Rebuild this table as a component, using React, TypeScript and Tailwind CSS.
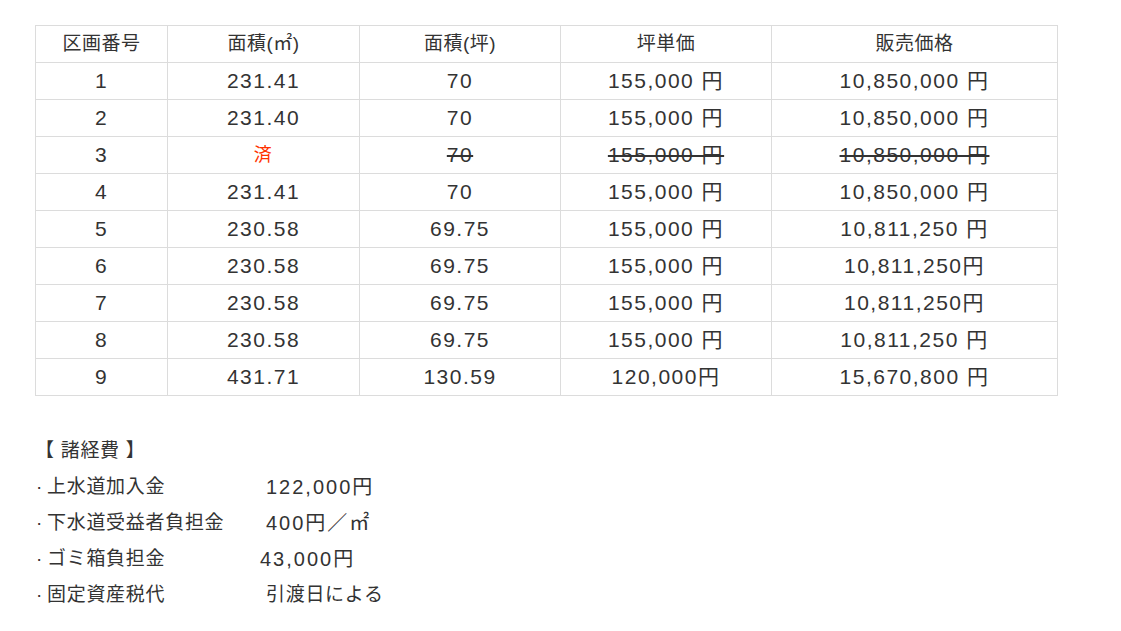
import React from 'react';

type Row = {
  no: string;
  area: string;
  tsubo: string;
  unit: string;
  price: string;
  sold?: boolean;
};

const rows: Row[] = [
  { no: '1', area: '231.41', tsubo: '70', unit: '155,000 円', price: '10,850,000 円' },
  { no: '2', area: '231.40', tsubo: '70', unit: '155,000 円', price: '10,850,000 円' },
  { no: '3', area: '済', tsubo: '70', unit: '155,000 円', price: '10,850,000 円', sold: true },
  { no: '4', area: '231.41', tsubo: '70', unit: '155,000 円', price: '10,850,000 円' },
  { no: '5', area: '230.58', tsubo: '69.75', unit: '155,000 円', price: '10,811,250 円' },
  { no: '6', area: '230.58', tsubo: '69.75', unit: '155,000 円', price: '10,811,250円' },
  { no: '7', area: '230.58', tsubo: '69.75', unit: '155,000 円', price: '10,811,250円' },
  { no: '8', area: '230.58', tsubo: '69.75', unit: '155,000 円', price: '10,811,250 円' },
  { no: '9', area: '431.71', tsubo: '130.59', unit: '120,000円', price: '15,670,800 円' },
];

const costs = [
  { label: '上水道加入金', value: '122,000円', extra: 'text-[20px] tracking-[2px]' },
  { label: '下水道受益者負担金', value: '400円／㎡', extra: 'text-[20px] tracking-[2px]' },
  { label: 'ゴミ箱負担金', value: '43,000円', extra: 'text-[20px] tracking-[2px] -ml-[6px]' },
  { label: '固定資産税代', value: '引渡日による', extra: '' },
];

const cell = 'border border-[#dcdcdc] h-[37px] p-0 text-center align-middle font-normal';

export default function App() {
  return (
    <div
      className="w-[1121px] h-[631px] bg-white text-[#333] pt-[25px] pl-[35px]"
      style={{ fontFamily: '"Liberation Sans", "Noto Sans CJK JP", sans-serif' }}
    >
      <table className="border-collapse w-[1022px] text-[21px] tracking-[1.5px] table-fixed">
        <colgroup>
          <col className="w-[132px]" />
          <col className="w-[192px]" />
          <col className="w-[201px]" />
          <col className="w-[211px]" />
          <col className="w-[286px]" />
        </colgroup>
        <thead>
          <tr className="text-[19px] tracking-[0.5px]">
            <th className={cell}>区画番号</th>
            <th className={cell}>面積(㎡)</th>
            <th className={cell}>面積(坪)</th>
            <th className={cell}>坪単価</th>
            <th className={cell}>販売価格</th>
          </tr>
        </thead>
        <tbody>
          {rows.map((r) => (
            <tr key={r.no}>
              <td className={cell}>{r.no}</td>
              <td className={`${cell} ${r.sold ? 'text-[#ff3300] text-[18px]' : ''}`}>{r.area}</td>
              <td className={`${cell} ${r.sold ? 'line-through' : ''}`}>{r.tsubo}</td>
              <td className={`${cell} ${r.sold ? 'line-through' : ''}`}>{r.unit}</td>
              <td className={`${cell} ${r.sold ? 'line-through' : ''}`}>{r.price}</td>
            </tr>
          ))}
        </tbody>
      </table>

      <div className="mt-[37px] text-[19px] leading-[36px] tracking-[0.7px]">
        <div>【 諸経費 】</div>
        {costs.map((c) => (
          <div key={c.label} className="flex">
            <span className="w-[231px]">
              <span className="inline-block w-[12px] pl-[1px]">·</span>
              {c.label}
            </span>
            <span className={c.extra}>{c.value}</span>
          </div>
        ))}
      </div>
    </div>
  );
}
